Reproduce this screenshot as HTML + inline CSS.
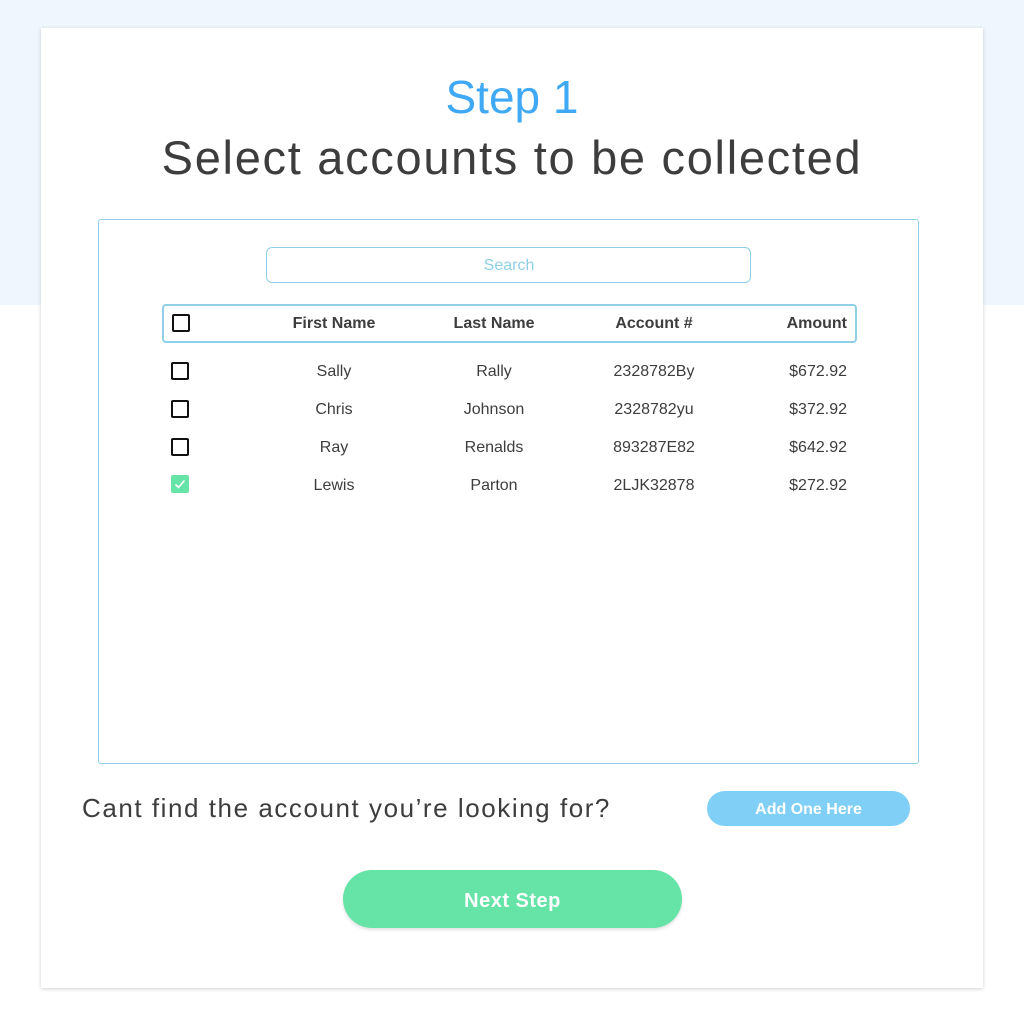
<!DOCTYPE html>
<html><head><style>
body{margin:0;width:1024px;height:1024px;background:#fff;position:relative;font-family:"Liberation Sans",sans-serif;overflow:hidden}
.bg{position:absolute;left:0;top:0;width:1024px;height:305px;background:#f0f6fe}
.card{position:absolute;left:41px;top:28px;width:942px;height:960px;background:#fff;box-shadow:0 1px 4px rgba(0,0,0,.18)}
.a{position:absolute;white-space:nowrap}
.c{transform:translateX(-50%)}
.cb{position:absolute;width:14px;height:14px;border:2px solid #111;border-radius:2px}
.t{font-size:16px;color:#3d3d3d}
.h{font-size:16px;color:#3d3d3d;font-weight:bold}
</style></head><body>
<div class="bg"></div>
<div class="card"></div>
<div class="a c" style="left:512px;top:70px;font-size:46px;color:#3fa9f5">Step 1</div>
<div class="a c" style="left:512px;top:130px;font-size:47px;color:#3d3d3d;letter-spacing:1.7px">Select accounts to be collected</div>
<div class="a" style="left:98px;top:219px;width:819px;height:543px;border:1px solid #8fd0e8;border-radius:3px"></div>
<div class="a" style="left:266px;top:247px;width:483px;height:34px;border:1px solid #8fd0e8;border-radius:6px"></div>
<div class="a c" style="left:509px;top:257px;font-size:16px;color:#8fd0e8">Search</div>
<div class="a" style="left:162px;top:304px;width:691px;height:35px;border:2px solid #8fd0e8;border-radius:4px"></div>
<div class="cb" style="left:172px;top:314px"></div>
<div class="a c h" style="left:334px;top:315px">First Name</div>
<div class="a c h" style="left:494px;top:315px">Last Name</div>
<div class="a c h" style="left:654px;top:315px">Account #</div>
<div class="a h" style="right:177px;top:315px">Amount</div>

<div class="cb" style="left:171px;top:362px"></div>
<div class="a c t" style="left:334px;top:363px">Sally</div>
<div class="a c t" style="left:494px;top:363px">Rally</div>
<div class="a c t" style="left:654px;top:363px">2328782By</div>
<div class="a t" style="right:177px;top:363px">$672.92</div>

<div class="cb" style="left:171px;top:400px"></div>
<div class="a c t" style="left:334px;top:401px">Chris</div>
<div class="a c t" style="left:494px;top:401px">Johnson</div>
<div class="a c t" style="left:654px;top:401px">2328782yu</div>
<div class="a t" style="right:177px;top:401px">$372.92</div>

<div class="cb" style="left:171px;top:438px"></div>
<div class="a c t" style="left:334px;top:439px">Ray</div>
<div class="a c t" style="left:494px;top:439px">Renalds</div>
<div class="a c t" style="left:654px;top:439px">893287E82</div>
<div class="a t" style="right:177px;top:439px">$642.92</div>

<div class="a" style="left:171px;top:475px;width:18px;height:18px;background:#66e3a6;border-radius:2px"><svg width="18" height="18"><path d="M4.5 9.5l3 3 6-7" stroke="#fff" stroke-width="1.6" fill="none"/></svg></div>
<div class="a c t" style="left:334px;top:477px">Lewis</div>
<div class="a c t" style="left:494px;top:477px">Parton</div>
<div class="a c t" style="left:654px;top:477px">2LJK32878</div>
<div class="a t" style="right:177px;top:477px">$272.92</div>

<div class="a" style="left:82px;top:793px;font-size:26px;color:#3d3d3d;letter-spacing:1.55px">Cant find the account you’re looking for?</div>
<div class="a" style="left:707px;top:791px;width:203px;height:35px;background:#7fcff7;border-radius:18px;color:#fff;font-weight:bold;font-size:16px;text-align:center;line-height:37px">Add One Here</div>
<div class="a" style="left:343px;top:870px;width:339px;height:58px;background:#66e3a6;border-radius:29px;color:#fff;font-weight:bold;font-size:20px;text-align:center;line-height:62px;box-shadow:0 2px 3px rgba(0,0,0,.12);letter-spacing:.5px">Next Step</div>
</body></html>
